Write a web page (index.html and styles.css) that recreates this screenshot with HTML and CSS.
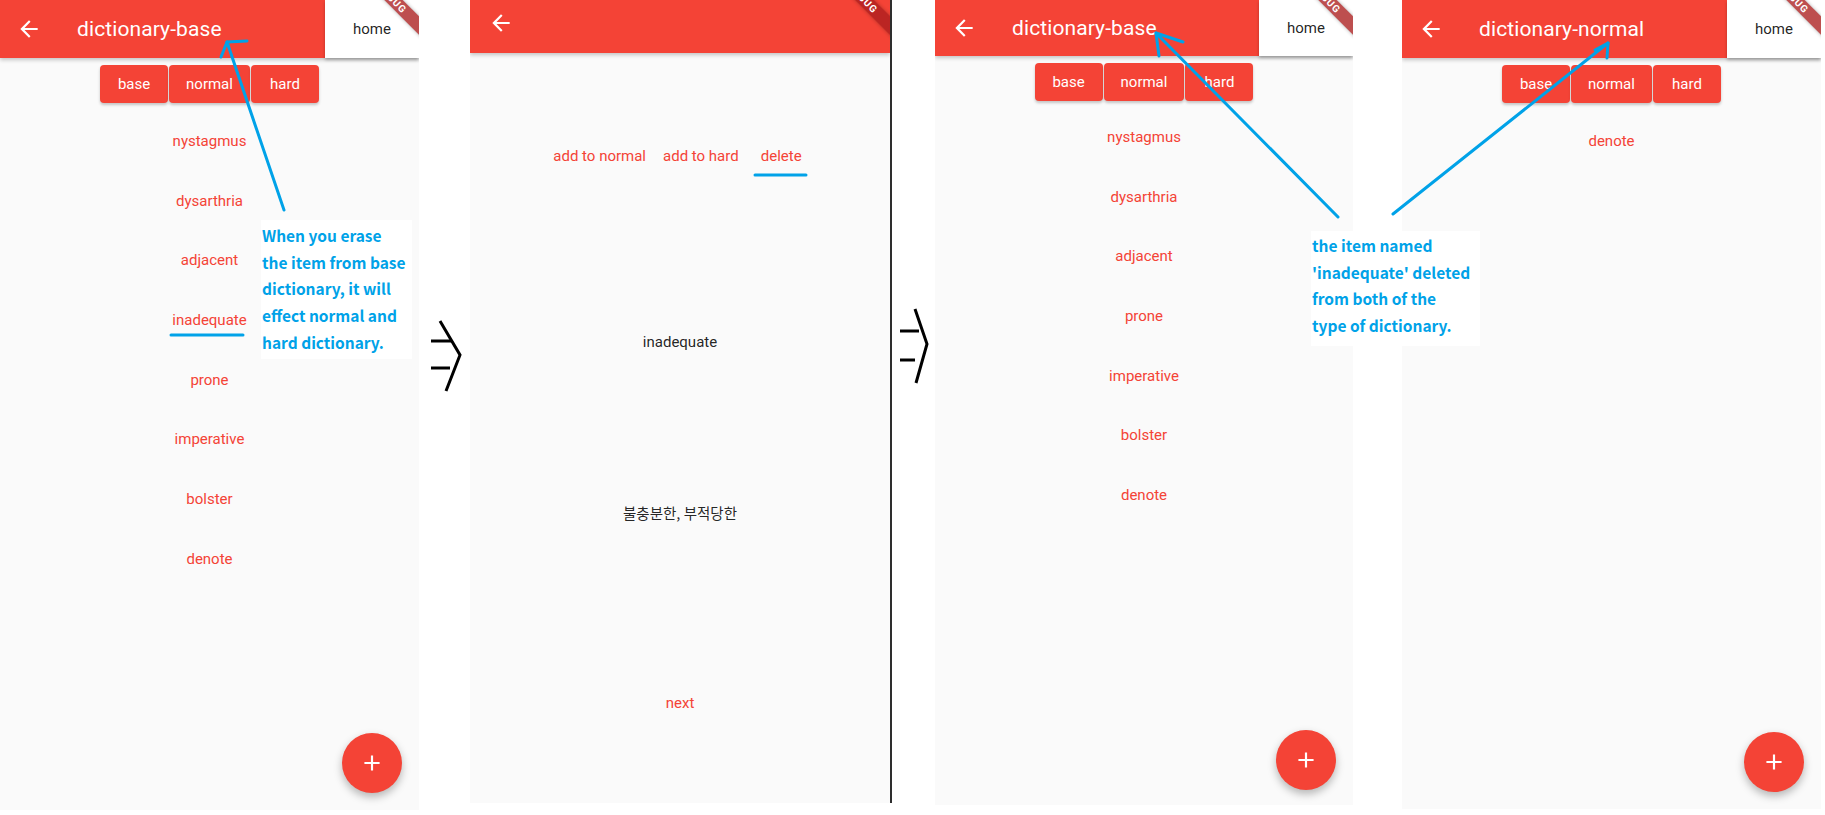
FILE: index.html
```html
<!DOCTYPE html>
<html lang="en">
<head>
<meta charset="utf-8">
<title>dictionary screens</title>
<link rel="stylesheet" href="styles.css">
</head>
<body>
<div class="canvas">

  <section class="screen s1">
    <header class="appbar">
      <svg class="back" viewBox="0 0 24 24"><path d="M20 11H7.83l5.59-5.59L12 4l-8 8 8 8 1.41-1.41L7.83 13H20v-2z"/></svg>
      <h1 class="title">dictionary-base</h1>
      <div class="home">home</div>
    </header>
    <div class="tabs">
      <span class="tab">base</span><span class="tab">normal</span><span class="tab">hard</span>
    </div>
    <ul class="words">
      <li class="word">nystagmus</li>
      <li class="word">dysarthria</li>
      <li class="word">adjacent</li>
      <li class="word">inadequate</li>
      <li class="word">prone</li>
      <li class="word">imperative</li>
      <li class="word">bolster</li>
      <li class="word">denote</li>
    </ul>
    <div class="fab"><svg viewBox="0 0 24 24"><path d="M19 13h-6v6h-2v-6H5v-2h6V5h2v6h6v2z"/></svg></div>
    <div class="debug"><span>DEBUG</span></div>
  </section>

  <div class="gap g1">
    <svg class="chev" width="51" height="815" viewBox="0 0 51 815">
      <polyline points="21,321 41,355 27,391"/>
      <line x1="12" y1="341" x2="33" y2="341"/>
      <line x1="12" y1="368" x2="31" y2="368"/>
    </svg>
  </div>

  <section class="screen s2">
    <header class="appbar">
      <svg class="back" viewBox="0 0 24 24"><path d="M20 11H7.83l5.59-5.59L12 4l-8 8 8 8 1.41-1.41L7.83 13H20v-2z"/></svg>
    </header>
    <div class="actions">
      <span class="action">add to normal</span>
      <span class="action">add to hard</span>
      <span class="action">delete</span>
    </div>
    <p class="term">inadequate</p>
    <p class="meaning">불충분한, 부적당한</p>
    <span class="next">next</span>
    <div class="debug"><span>DEBUG</span></div>
  </section>

  <div class="gap g2">
    <svg class="chev" width="45" height="815" viewBox="0 0 45 815">
      <polyline points="25,309 37,344 26,383"/>
      <line x1="10" y1="331" x2="29" y2="331"/>
      <line x1="10" y1="360" x2="25" y2="360"/>
    </svg>
  </div>

  <section class="screen s3">
    <header class="appbar">
      <svg class="back" viewBox="0 0 24 24"><path d="M20 11H7.83l5.59-5.59L12 4l-8 8 8 8 1.41-1.41L7.83 13H20v-2z"/></svg>
      <h1 class="title">dictionary-base</h1>
      <div class="home">home</div>
    </header>
    <div class="tabs">
      <span class="tab">base</span><span class="tab">normal</span><span class="tab">hard</span>
    </div>
    <ul class="words">
      <li class="word">nystagmus</li>
      <li class="word">dysarthria</li>
      <li class="word">adjacent</li>
      <li class="word">prone</li>
      <li class="word">imperative</li>
      <li class="word">bolster</li>
      <li class="word">denote</li>
    </ul>
    <div class="fab"><svg viewBox="0 0 24 24"><path d="M19 13h-6v6h-2v-6H5v-2h6V5h2v6h6v2z"/></svg></div>
    <div class="debug"><span>DEBUG</span></div>
  </section>

  <div class="gap g3"></div>

  <section class="screen s4">
    <header class="appbar">
      <svg class="back" viewBox="0 0 24 24"><path d="M20 11H7.83l5.59-5.59L12 4l-8 8 8 8 1.41-1.41L7.83 13H20v-2z"/></svg>
      <h1 class="title">dictionary-normal</h1>
      <div class="home">home</div>
    </header>
    <div class="tabs">
      <span class="tab">base</span><span class="tab">normal</span><span class="tab">hard</span>
    </div>
    <ul class="words">
      <li class="word">denote</li>
    </ul>
    <div class="fab"><svg viewBox="0 0 24 24"><path d="M19 13h-6v6h-2v-6H5v-2h6V5h2v6h6v2z"/></svg></div>
    <div class="debug"><span>DEBUG</span></div>
  </section>

  <svg class="marks" width="1825" height="815" viewBox="0 0 1825 815">
    <line x1="171" y1="335" x2="243" y2="335"/>
    <line x1="755" y1="175" x2="806" y2="175"/>
    <polyline points="284,210 227,42 247,41"/>
    <line x1="227" y1="42" x2="221" y2="57"/>
    <polyline points="1338,217 1156,33 1183,42"/>
    <line x1="1156" y1="33" x2="1159" y2="56"/>
    <polyline points="1393,214 1608,43 1595,50"/>
    <line x1="1608" y1="43" x2="1607" y2="58"/>
  </svg>

  <p class="note n1">When you erase<br>the item from base<br>dictionary, it will<br>effect normal and<br>hard dictionary.</p>
  <p class="note n2">the item named<br>'inadequate' deleted<br>from both of the<br>type of dictionary.</p>
</div>
</body>
</html>
```

FILE: styles.css
```css
* { box-sizing: border-box; }

html, body {
  margin: 0;
  padding: 0;
  background: #ffffff;
}

body {
  width: 1825px;
  height: 815px;
  overflow: hidden;
  font-family: Roboto, "Noto Sans CJK KR", sans-serif;
}

.canvas {
  position: relative;
  display: flex;
  align-items: flex-start;
  width: 1825px;
  height: 815px;
}

/* ---------- phone screens ---------- */
.screen {
  position: relative;
  display: flex;
  flex-direction: column;
  align-items: center;
  background: #fafafa;
  overflow: hidden;
  flex: none;
}
.s1 { width: 419px; height: 810px; }
.s2 { width: 420px; height: 803px; }
.s3 { width: 418px; height: 805px; }
.s4 { width: 419px; height: 809px; }

.appbar {
  position: relative;
  z-index: 1;
  align-self: stretch;
  display: flex;
  align-items: center;
  height: 58px;
  background: #f44336;
  box-shadow: 0 2px 4px rgba(0, 0, 0, 0.22);
  flex: none;
}
.s2 .appbar { height: 53px; align-items: flex-start; }
.s3 .appbar { height: 56px; }

.back {
  width: 26px;
  height: 26px;
  margin-left: 16px;
  fill: #ffffff;
  flex: none;
}
.s2 .back { margin-left: 18px; margin-top: 10px; }

.title {
  margin: 0 0 0 35px;
  color: #ffffff;
  font-size: 21px;
  font-weight: 400;
  letter-spacing: 0.1px;
}

.home {
  margin-left: auto;
  align-self: stretch;
  width: 94px;
  display: flex;
  align-items: center;
  justify-content: center;
  background: #ffffff;
  color: rgba(0, 0, 0, 0.87);
  font-size: 15px;
  font-weight: 400;
  box-shadow: 0 2px 3px rgba(0, 0, 0, 0.25);
}

.tabs {
  display: flex;
  gap: 1px;
  margin-top: 7px;
  flex: none;
}

.tab {
  min-width: 68px;
  height: 38px;
  padding: 0 17px;
  display: flex;
  align-items: center;
  justify-content: center;
  background: #f44336;
  color: #ffffff;
  font-size: 15px;
  font-weight: 400;
  border-radius: 4px;
  box-shadow: 0 2px 3px rgba(0, 0, 0, 0.22);
}

.words {
  list-style: none;
  margin: 8px 0 0;
  padding: 0;
  display: flex;
  flex-direction: column;
  align-items: center;
}
.s3 .words { margin-top: 6px; }

.word {
  height: 59.7px;
  display: flex;
  align-items: center;
  justify-content: center;
  color: #f44336;
  font-size: 15px;
  font-weight: 400;
}

.fab {
  margin-top: auto;
  margin-right: 17px;
  margin-bottom: 17px;
  align-self: flex-end;
  width: 60px;
  height: 60px;
  border-radius: 50%;
  background: #f44336;
  display: flex;
  align-items: center;
  justify-content: center;
  box-shadow: 0 4px 8px rgba(0, 0, 0, 0.28);
  flex: none;
}
.s3 .fab { margin-bottom: 15px; }
.fab svg { width: 26px; height: 26px; fill: #ffffff; }

/* debug banner in the corner */
.debug {
  position: absolute;
  top: -8px;
  right: -23px;
  z-index: 2;
  width: 100px;
  height: 13px;
  transform: rotate(45deg);
  background: rgba(170, 30, 30, 0.78);
  display: flex;
  align-items: center;
  justify-content: center;
  box-shadow: 0 0 4px rgba(0, 0, 0, 0.3);
}
.debug span {
  color: #ffffff;
  font-size: 10px;
  font-weight: 700;
  letter-spacing: 1px;
}

/* ---------- detail screen ---------- */
.actions {
  display: flex;
  justify-content: center;
  margin-top: 84px;
  flex: none;
}
.action, .next {
  min-width: 68px;
  height: 38px;
  padding: 0 8.5px;
  display: flex;
  align-items: center;
  justify-content: center;
  color: #f44336;
  font-size: 15px;
  font-weight: 400;
}
.term, .meaning {
  margin: 0;
  height: 20px;
  line-height: 20px;
  color: rgba(0, 0, 0, 0.87);
  font-size: 15px;
}
.term { margin-top: 157px; }
.meaning {
  margin-top: 151px;
  font-family: "Noto Sans CJK KR", Roboto, sans-serif;
  font-size: 14.5px;
}
.next { margin-top: 161px; }

/* ---------- gaps between screens ---------- */
.gap {
  flex: none;
  height: 815px;
}
.g1 { width: 51px; }
.g2 {
  width: 45px;
  height: 803px;
  border-left: 2px solid #2e2e2e;
}
.g3 { width: 49px; }

.chev {
  display: block;
  fill: none;
  stroke: #000000;
  stroke-width: 3;
}
.g2 .chev { margin-left: -2px; }

/* ---------- annotations ---------- */
.marks {
  position: absolute;
  left: 0;
  top: 0;
  z-index: 5;
  pointer-events: none;
  fill: none;
  stroke: #00a2e8;
  stroke-width: 3;
  stroke-linecap: round;
  stroke-linejoin: round;
}

.note {
  position: absolute;
  z-index: 6;
  margin: 0;
  background: #ffffff;
  color: #00a2e8;
  font-family: "Noto Sans CJK KR", "Open Sans", sans-serif;
  font-weight: 700;
  font-size: 15.5px;
  line-height: 26.7px;
  white-space: nowrap;
}
.n1 {
  left: 261px;
  top: 220px;
  width: 151px;
  height: 139px;
  padding: 2px 0 0 1px;
}
.n2 {
  left: 1311px;
  top: 231px;
  width: 169px;
  height: 115px;
  padding: 1px 0 0 1px;
}
```
